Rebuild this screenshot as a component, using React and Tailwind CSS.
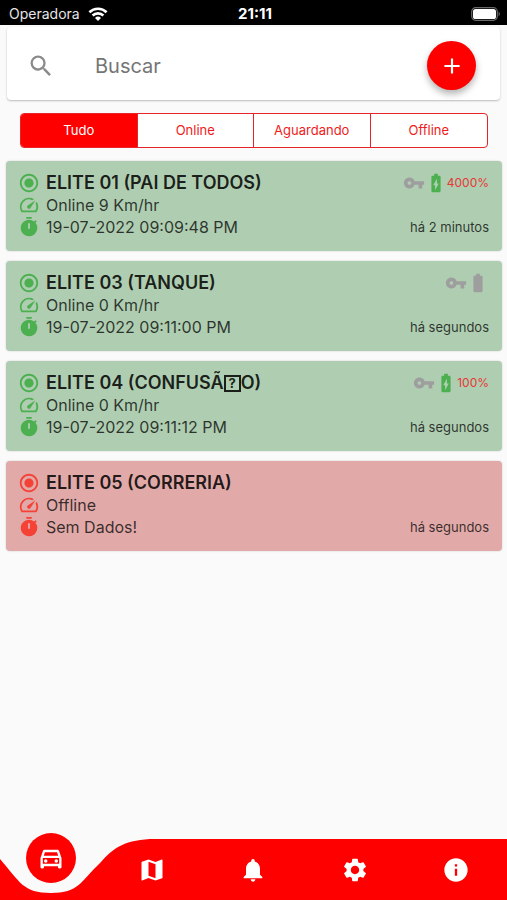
import React, { useState } from "react";
import {
  MdAdd,
  MdBatteryChargingFull,
  MdBatteryFull,
  MdInfo,
  MdMap,
  MdNotifications,
  MdOutlineDirectionsCar,
  MdRadioButtonChecked,
  MdSearch,
  MdSettings,
  MdSpeed,
  MdVpnKey,
} from "react-icons/md";

const FILTERS = ["Tudo", "Online", "Aguardando", "Offline"];

const DEVICES = [
  { id: 1, name: "ELITE 01 (PAI DE TODOS)", online: true, status: "Online 9 Km/hr", date: "19-07-2022 09:09:48 PM", ago: "há 2 minutos", battery: "4000%" },
  { id: 3, name: "ELITE 03 (TANQUE)", online: true, status: "Online 0 Km/hr", date: "19-07-2022 09:11:00 PM", ago: "há segundos", battery: null },
  { id: 4, name: "ELITE 04 (CONFUSÃ\u0083O)", online: true, status: "Online 0 Km/hr", date: "19-07-2022 09:11:12 PM", ago: "há segundos", battery: "100%" },
  { id: 5, name: "ELITE 05 (CORRERIA)", online: false, status: "Offline", date: "Sem Dados!", ago: "há segundos", battery: null },
];

const TABS = [
  { label: "Veículos", Icon: MdOutlineDirectionsCar },
  { label: "Mapa", Icon: MdMap },
  { label: "Notificações", Icon: MdNotifications },
  { label: "Configurações", Icon: MdSettings },
  { label: "Informações", Icon: MdInfo },
];

const TimerIcon = ({ className }) => (
  <svg viewBox="0 0 24 24" fill="currentColor" className={className} aria-hidden="true">
    <path d="M15 1H9v2h6V1zm4.03 6.39 1.42-1.42c-.43-.51-.9-.99-1.41-1.41l-1.42 1.42A8.96 8.96 0 0 0 12 4c-4.97 0-9 4.03-9 9s4.02 9 9 9a8.99 8.99 0 0 0 7.03-14.61zM13 14h-2V8h2v6z" />
  </svg>
);

const StatusBar = () => (
  <header className="grid h-[25px] grid-cols-3 items-center bg-black pt-0.5 pl-[9px] pr-1.5 text-sm text-white">
    <div className="flex items-center gap-2 text-neutral-200">
      <span>Operadora</span>
      <svg viewBox="0 0 20 14" className="h-3.5 w-5 text-white" fill="none" stroke="currentColor" strokeWidth="2.6" aria-hidden="true">
        <path d="M1.4 5.2a12.4 12.4 0 0 1 17.2 0" />
        <path d="M4.6 8.5a7.8 7.8 0 0 1 10.8 0" />
        <path d="M10 14l-3-3.1a4.4 4.4 0 0 1 6 0z" fill="currentColor" stroke="none" />
      </svg>
    </div>
    <span className="text-center text-[15px] font-bold">21:11</span>
    <svg viewBox="0 0 30 14" className="h-3.5 w-[30px] justify-self-end" aria-hidden="true">
      <rect x="0.7" y="0.7" width="25.6" height="12.6" rx="4" fill="none" stroke="#6b6b6b" strokeWidth="1.2" />
      <rect x="2" y="2" width="23" height="10" rx="2.6" fill="#fff" />
      <path d="M27.6 4.8c1.6.6 1.6 3.8 0 4.4z" fill="#6b6b6b" />
    </svg>
  </header>
);

const DeviceName = ({ name }) => (
  <h2 className="flex items-center whitespace-pre text-lg leading-[22px] font-semibold text-black/85">
    {name.split("\u0083").map((part, i) => (
      <React.Fragment key={i}>
        {i > 0 && (
          <span className="flex h-[17px] w-[17px] items-center justify-center border-2 border-black/85 text-[13px] font-bold">?</span>
        )}
        {part}
      </React.Fragment>
    ))}
  </h2>
);

const DeviceCard = ({ device }) => {
  const iconColor = device.online ? "text-[#4caf50]" : "text-[#f44336]";

  return (
    <li
      className={`flex h-[90px] justify-between rounded pt-[11px] pr-[13px] pl-3 shadow-[0_0_2px_rgba(0,0,0,0.2)] ${
        device.online ? "bg-[#afcdb1]" : "bg-[#e1aaa9]"
      }`}
    >
      <div className={iconColor}>
        <div className="flex items-center gap-1.5">
          <MdRadioButtonChecked className="size-[22px]" />
          <DeviceName name={device.name} />
        </div>
        <div className="flex items-center gap-1.5">
          <MdSpeed className="size-[22px]" />
          <p className="text-base leading-[22px] text-black/75">{device.status}</p>
        </div>
        <div className="flex items-center gap-1.5">
          <TimerIcon className="size-[22px]" />
          <p className="text-base leading-[22px] text-black/75">{device.date}</p>
        </div>
      </div>

      <div className="flex flex-col items-end justify-between pb-3.5">
        <div className="flex h-[22px] items-center">
          {device.online && (
            <>
              <MdVpnKey className="size-[22px] text-[#9e9e9e]" />
              {device.battery ? (
                <>
                  <MdBatteryChargingFull className="size-[22px] text-[#4caf50]" />
                  <span className="text-xs text-[#e53935]">{device.battery}</span>
                </>
              ) : (
                <MdBatteryFull className="size-[22px] text-[#9e9e9e]" />
              )}
            </>
          )}
        </div>
        <span className="text-[13px] leading-5 text-black/75">{device.ago}</span>
      </div>
    </li>
  );
};

const BottomNav = () => {
  const [active, setActive] = useState(0);

  return (
    <nav className="relative mt-auto">
      <svg viewBox="0 0 507 61" preserveAspectRatio="none" className="absolute inset-0 h-full w-full" aria-hidden="true">
        <path d="M0 20C20 43 23 54 51 54S80 43 101 23C113 9 126 0 155 0H507V61H0z" fill="#ff0000" />
      </svg>
      <div className="relative grid h-[61px] grid-cols-5 items-center justify-items-center">
        {TABS.map(({ label, Icon }, i) => (
          <button
            key={label}
            type="button"
            aria-label={label}
            onClick={() => setActive(i)}
            className={`flex size-[50px] items-center justify-center rounded-full text-white ${
              i === active ? "-translate-y-3 bg-[#ff0000]" : ""
            }`}
          >
            <Icon className="size-7" />
          </button>
        ))}
      </div>
    </nav>
  );
};

const App = () => {
  const [filter, setFilter] = useState("Tudo");
  const [search, setSearch] = useState("");

  const visible = DEVICES.filter((d) => {
    if (filter === "Online" && !d.online) return false;
    if (filter === "Offline" && d.online) return false;
    if (filter === "Aguardando") return false;
    return d.name.toLowerCase().includes(search.toLowerCase());
  });

  return (
    <div className="flex min-h-screen flex-col bg-[#fafafa] font-['Inter','Liberation_Sans',sans-serif]">
      <StatusBar />

      <main className="pb-6">
        {/* Search */}
        <div className="mx-[7px] mt-0.5 flex h-[73px] items-center rounded bg-white pt-1 pr-6 pl-5 shadow-[0_1px_2px_rgba(0,0,0,0.25)]">
          <label htmlFor="search" aria-label="Buscar">
            <MdSearch className="size-7 text-[#8a8a8a]" />
          </label>
          <input
            id="search"
            value={search}
            onChange={(e) => setSearch(e.target.value)}
            placeholder="Buscar"
            className="ml-10 min-w-0 flex-1 text-xl text-neutral-700 outline-none placeholder:text-[#757575]"
          />
          <button
            type="button"
            aria-label="Adicionar"
            className="flex size-[49px] items-center justify-center rounded-full bg-[#ff0000] text-white shadow-[0_4px_7px_rgba(0,0,0,0.3)]"
          >
            <MdAdd className="size-[26px]" />
          </button>
        </div>

        {/* Filters */}
        <div className="mr-[19px] ml-5 mt-[13px] grid h-[35px] grid-cols-4 divide-x divide-[#e8232a] overflow-hidden rounded border border-[#e8232a] bg-white text-[13px]">
          {FILTERS.map((f) => (
            <button
              key={f}
              type="button"
              aria-pressed={f === filter}
              onClick={() => setFilter(f)}
              className={f === filter ? "bg-[#ff0000] text-white" : "text-[#ee1c1c]"}
            >
              {f}
            </button>
          ))}
        </div>

        {/* Devices */}
        <ul className="mr-[5px] ml-1.5 mt-[13px] flex flex-col gap-2.5">
          {visible.map((d) => (
            <DeviceCard key={d.id} device={d} />
          ))}
        </ul>
      </main>

      <BottomNav />
    </div>
  );
};

export default App;
